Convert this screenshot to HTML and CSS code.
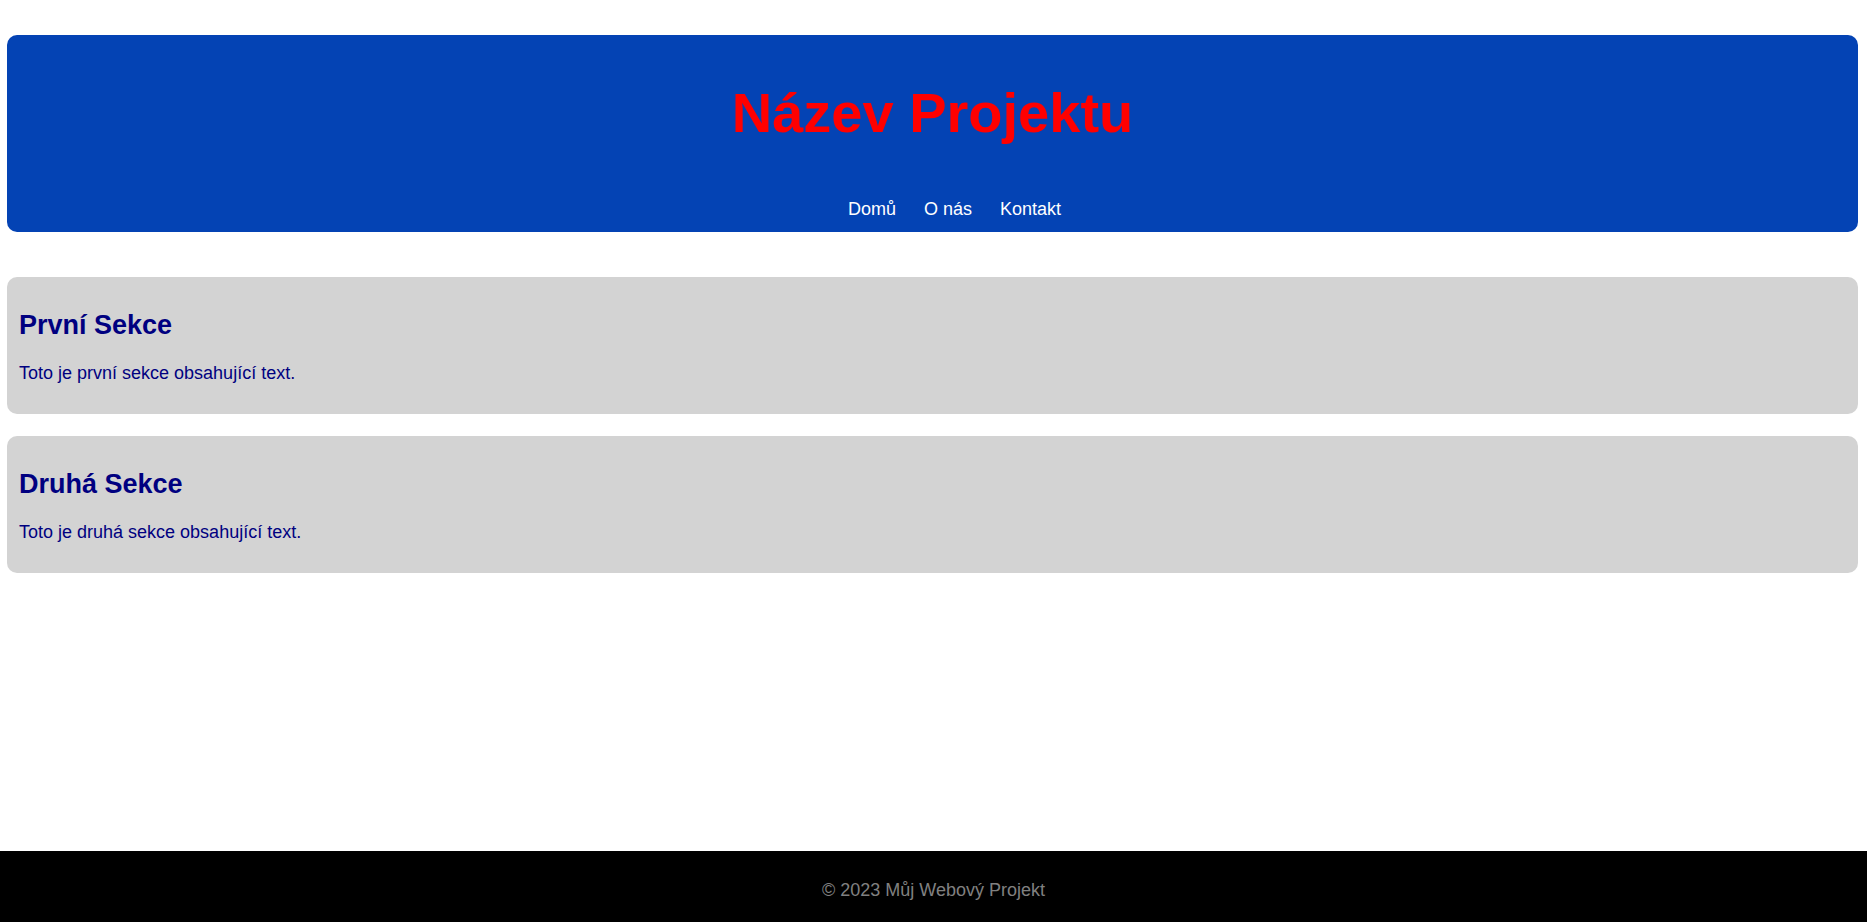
FILE: index.html
```html
<!DOCTYPE html>
<html lang="cs">
<head>
<meta charset="utf-8">
<title>Název Projektu</title>
<link rel="stylesheet" href="styles.css">
</head>
<body>
<div class="page">
  <header class="site-header">
    <h1 class="site-title">Název Projektu</h1>
    <nav class="site-nav">
      <ul class="nav-list">
        <li><a href="#">Domů</a></li>
        <li><a href="#">O nás</a></li>
        <li><a href="#">Kontakt</a></li>
      </ul>
    </nav>
  </header>
  <main class="content">
    <section class="card">
      <h2 class="card-title">První Sekce</h2>
      <p class="card-text">Toto je první sekce obsahující text.</p>
    </section>
    <section class="card">
      <h2 class="card-title">Druhá Sekce</h2>
      <p class="card-text">Toto je druhá sekce obsahující text.</p>
    </section>
  </main>
</div>
<footer class="site-footer">
  <p class="footer-text">© 2023 Můj Webový Projekt</p>
</footer>
</body>
</html>
```

FILE: styles.css
```css
html, body {
  margin: 0;
  padding: 0;
}

body {
  font-family: "Liberation Sans", Arial, sans-serif;
  font-size: 18px;
  background: #ffffff;
  min-height: 100vh;
  display: flex;
  flex-direction: column;
}

.page {
  flex: 1;
  padding: 35px 9px 0 7px;
}

.site-header {
  background: #0443b4;
  border-radius: 10px;
  padding: 46px 0 12px;
  text-align: center;
}

.site-title {
  margin: 0;
  color: #ff0000;
  font-size: 56px;
  font-weight: bold;
  line-height: 64px;
}

.site-nav {
  margin-top: 54px;
}

.nav-list {
  list-style: none;
  margin: 0;
  padding: 0 0 0 44px;
  display: flex;
  justify-content: center;
  gap: 28px;
  line-height: 21px;
}

.nav-list a {
  color: #ffffff;
  text-decoration: none;
  font-size: 18px;
}

.content {
  padding-top: 45px;
  display: flex;
  flex-direction: column;
  gap: 22px;
}

.card {
  background: #d3d3d3;
  border-radius: 10px;
  padding: 11px 12px 12px;
  color: #000080;
}

.card-title {
  font-size: 27px;
  margin: 22px 0;
  line-height: 31px;
}

.card-text {
  margin: 0 0 18px;
  font-size: 18px;
  line-height: 21px;
}

.site-footer {
  background: #000000;
  color: #808080;
  text-align: center;
  height: 71px;
  box-sizing: border-box;
  padding-top: 29px;
}

.footer-text {
  margin: 0;
  font-size: 18px;
  line-height: 21px;
}
```
